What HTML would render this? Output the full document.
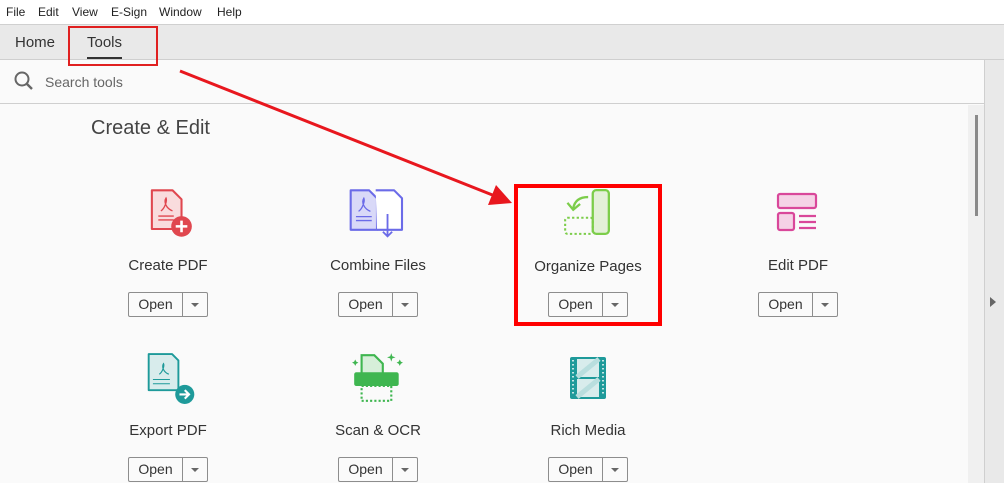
<!DOCTYPE html>
<html><head><style>
*{margin:0;padding:0;box-sizing:border-box}
body{width:1004px;height:483px;overflow:hidden;background:#fafafa;font-family:"Liberation Sans",sans-serif;color:#333;position:relative}
.menu{position:absolute;top:0;left:0;width:1004px;height:24px;background:#fff;font-size:12px;color:#222}
.menu span{position:absolute;top:5px}
.tabs{position:absolute;top:24px;left:0;width:1004px;height:36px;background:#e9e9e9;border-top:1px solid #d0d0d0;border-bottom:1px solid #cfcfcf}
.tabs span{position:absolute;top:9px;font-size:15px;color:#333}
.search{position:absolute;top:60px;left:0;width:984px;height:44px;background:#fafafa;border-bottom:1px solid #cfcfcf}
.right{position:absolute;top:60px;left:984px;width:20px;height:423px;background:#e9e9e9;border-left:1px solid #cfcfcf}
.track{position:absolute;top:105px;left:968px;width:16px;height:378px;background:#f0f0f0}
.thumb{position:absolute;top:115px;left:975px;width:3px;height:101px;background:#8a8a8a}
h1{position:absolute;left:91px;top:117px;font-size:20px;font-weight:normal;color:#444}
.lab{position:absolute;width:200px;text-align:center;font-size:15px;color:#333}
.btn{position:absolute;width:80px;height:25px;border:1px solid #8d8d8d;border-radius:2px;background:#fafafa;font-size:14px}
.btn .o{position:absolute;left:0;width:53px;top:3px;text-align:center}
.btn .d{position:absolute;left:53px;top:0;width:1px;height:23px;background:#8d8d8d}
.btn .a{position:absolute;left:62px;top:10px;border-left:4px solid transparent;border-right:4px solid transparent;border-top:4px solid #666}
svg.i{position:absolute}
</style></head><body>
<div class="menu"><span style="left:6px">File</span><span style="left:38px">Edit</span><span style="left:72px">View</span><span style="left:111px">E-Sign</span><span style="left:159px">Window</span><span style="left:217px">Help</span></div>
<div class="tabs"><span style="left:15px">Home</span><span style="left:87px">Tools</span><div style="position:absolute;left:87px;top:32px;width:35px;height:2px;background:#333"></div></div>
<div class="search">
<svg style="position:absolute;left:13px;top:10px" width="22" height="22" viewBox="0 0 22 22"><circle cx="9" cy="9" r="6.5" fill="none" stroke="#666" stroke-width="2"/><line x1="13.5" y1="13.5" x2="19" y2="19" stroke="#666" stroke-width="2.4"/></svg>
<span style="position:absolute;left:45px;top:14px;font-size:14px;color:#666">Search tools</span></div>
<div class="right"><div style="position:absolute;left:5px;top:237px;border-top:5px solid transparent;border-bottom:5px solid transparent;border-left:6px solid #666"></div></div>
<div class="track"></div><div class="thumb"></div>
<h1>Create &amp; Edit</h1>

<svg class="i" style="left:149px;top:189px" width="47" height="49" viewBox="1 1 36 38"><path d="M3 2h16l7 7v23H3z" fill="#f9dcdd" stroke="#e0474f" stroke-width="1.6" stroke-linejoin="round"/><path d="M8 22h12M8 25h12" stroke="#e0474f"/><path d="M10 18c3-2 5-8 4-10-2 3 0 8 5 10" fill="none" stroke="#e0474f" stroke-width="1"/><circle cx="26" cy="30" r="8" fill="#e0474f"/><path d="M26 25.5v9M21.5 30h9" stroke="#fff" stroke-width="2"/></svg>
<svg class="i" style="left:349px;top:189px" width="56" height="50" viewBox="1 1 42 38"><path d="M2 2h14l6 6v24H2z" fill="#d9d9f8" stroke="#6b6be8" stroke-width="1.6" stroke-linejoin="round"/><path d="M21 2h14l6 6v24H22" fill="#fff" stroke="#6b6be8" stroke-width="1.6" stroke-linejoin="round"/><path d="M6 22h12M6 25h12" stroke="#6b6be8"/><path d="M8 18c3-2 5-8 4-10-2 3 0 8 5 10" fill="none" stroke="#6b6be8" stroke-width="1"/><path d="M30 20v17M26.5 33.5l3.5 3.5 3.5-3.5" fill="none" stroke="#6b6be8" stroke-width="1.4"/></svg>
<svg class="i" style="left:564px;top:189px" width="46" height="46" viewBox="3 1 40 40"><rect x="28" y="2" width="14" height="38" rx="3" fill="#e3f0d8" stroke="#7ccd4a" stroke-width="2"/><rect x="4" y="26" width="24" height="14" rx="2" fill="none" stroke="#7ccd4a" stroke-width="1.8" stroke-dasharray="2 2"/><path d="M24 8c-8 0-12 4-13 10" fill="none" stroke="#7ccd4a" stroke-width="2"/><path d="M6 13l5 6 6-5" fill="none" stroke="#7ccd4a" stroke-width="2"/></svg>
<svg class="i" style="left:776px;top:192px" width="44" height="40" viewBox="0 0 44 40"><rect x="2" y="2" width="38" height="14" rx="2" fill="#f5d2e6" stroke="#d9479a" stroke-width="2.2"/><rect x="2" y="21" width="16" height="17" rx="2" fill="#f5d2e6" stroke="#d9479a" stroke-width="2.2"/><path d="M23 24h17M23 30h17M23 36h17" stroke="#d9479a" stroke-width="2.2"/></svg>

<svg class="i" style="left:147px;top:353px" width="49" height="52" viewBox="1 1 45 49"><path d="M2 2h22l6 6v28H2z" fill="#d8ecec" stroke="#1e9a9a" stroke-width="1.8" stroke-linejoin="round"/><path d="M6 26h16M6 30h16" stroke="#1e9a9a"/><path d="M12 21c3-2 5-8 4-10-2 3 0 8 5 10" fill="none" stroke="#1e9a9a" stroke-width="1.1"/><circle cx="36" cy="40" r="9" fill="#1e9a9a"/><path d="M31 40h9M36 36l4 4-4 4" fill="none" stroke="#fff" stroke-width="2"/></svg>
<svg class="i" style="left:351px;top:352px" width="53" height="51" viewBox="6 1 50 48"><path d="M16 4h12l8 8v12H16z" fill="#d6efd9" stroke="#3fb650" stroke-width="2"/><rect x="9" y="20" width="42" height="13" rx="2" fill="#3fb650"/><rect x="16" y="33" width="28" height="14" fill="none" stroke="#3fb650" stroke-width="2" stroke-dasharray="2 2"/><path d="M44 2l1 3 3 1-3 1-1 3-1-3-3-1 3-1zM52 8l1 2 2 1-2 1-1 2-1-2-2-1 2-1zM10 8l1 2 2 1-2 1-1 2-1-2-2-1 2-1z" fill="#3fb650"/></svg>
<svg class="i" style="left:568px;top:355px" width="40" height="46" viewBox="0 0 40 46"><rect x="2" y="2" width="36" height="42" rx="2" fill="#1e9a9a"/><rect x="9" y="4" width="22" height="18" fill="#d8ecec"/><rect x="9" y="24" width="22" height="18" fill="#d8ecec"/><path d="M9 22L31 4M9 42l22-18" stroke="#b9dede" stroke-width="5"/><path d="M5 5v36M35 5v36" stroke="#fff" stroke-width="1.5" stroke-dasharray="1.5 2.5"/></svg>

<div class="lab" style="left:68px;top:257px">Create PDF</div>
<div class="lab" style="left:278px;top:257px">Combine Files</div>
<div class="lab" style="left:488px;top:258px">Organize Pages</div>
<div class="lab" style="left:698px;top:257px">Edit PDF</div>
<div class="lab" style="left:68px;top:422px">Export PDF</div>
<div class="lab" style="left:278px;top:422px">Scan &amp; OCR</div>
<div class="lab" style="left:488px;top:422px">Rich Media</div>

<div class="btn" style="left:128px;top:292px"><span class="o">Open</span><span class="d"></span><span class="a"></span></div>
<div class="btn" style="left:338px;top:292px"><span class="o">Open</span><span class="d"></span><span class="a"></span></div>
<div class="btn" style="left:548px;top:292px"><span class="o">Open</span><span class="d"></span><span class="a"></span></div>
<div class="btn" style="left:758px;top:292px"><span class="o">Open</span><span class="d"></span><span class="a"></span></div>
<div class="btn" style="left:128px;top:457px"><span class="o">Open</span><span class="d"></span><span class="a"></span></div>
<div class="btn" style="left:338px;top:457px"><span class="o">Open</span><span class="d"></span><span class="a"></span></div>
<div class="btn" style="left:548px;top:457px"><span class="o">Open</span><span class="d"></span><span class="a"></span></div>

<div style="position:absolute;left:68px;top:26px;width:90px;height:40px;border:2px solid #e02020"></div>
<div style="position:absolute;left:514px;top:184px;width:148px;height:142px;border:4px solid #f00"></div>
<svg style="position:absolute;left:0;top:0" width="1004" height="483"><line x1="180" y1="71" x2="495" y2="196" stroke="#e8171e" stroke-width="3"/><path d="M512 203L488 205 496 185z" fill="#e8171e"/></svg>
</body></html>
